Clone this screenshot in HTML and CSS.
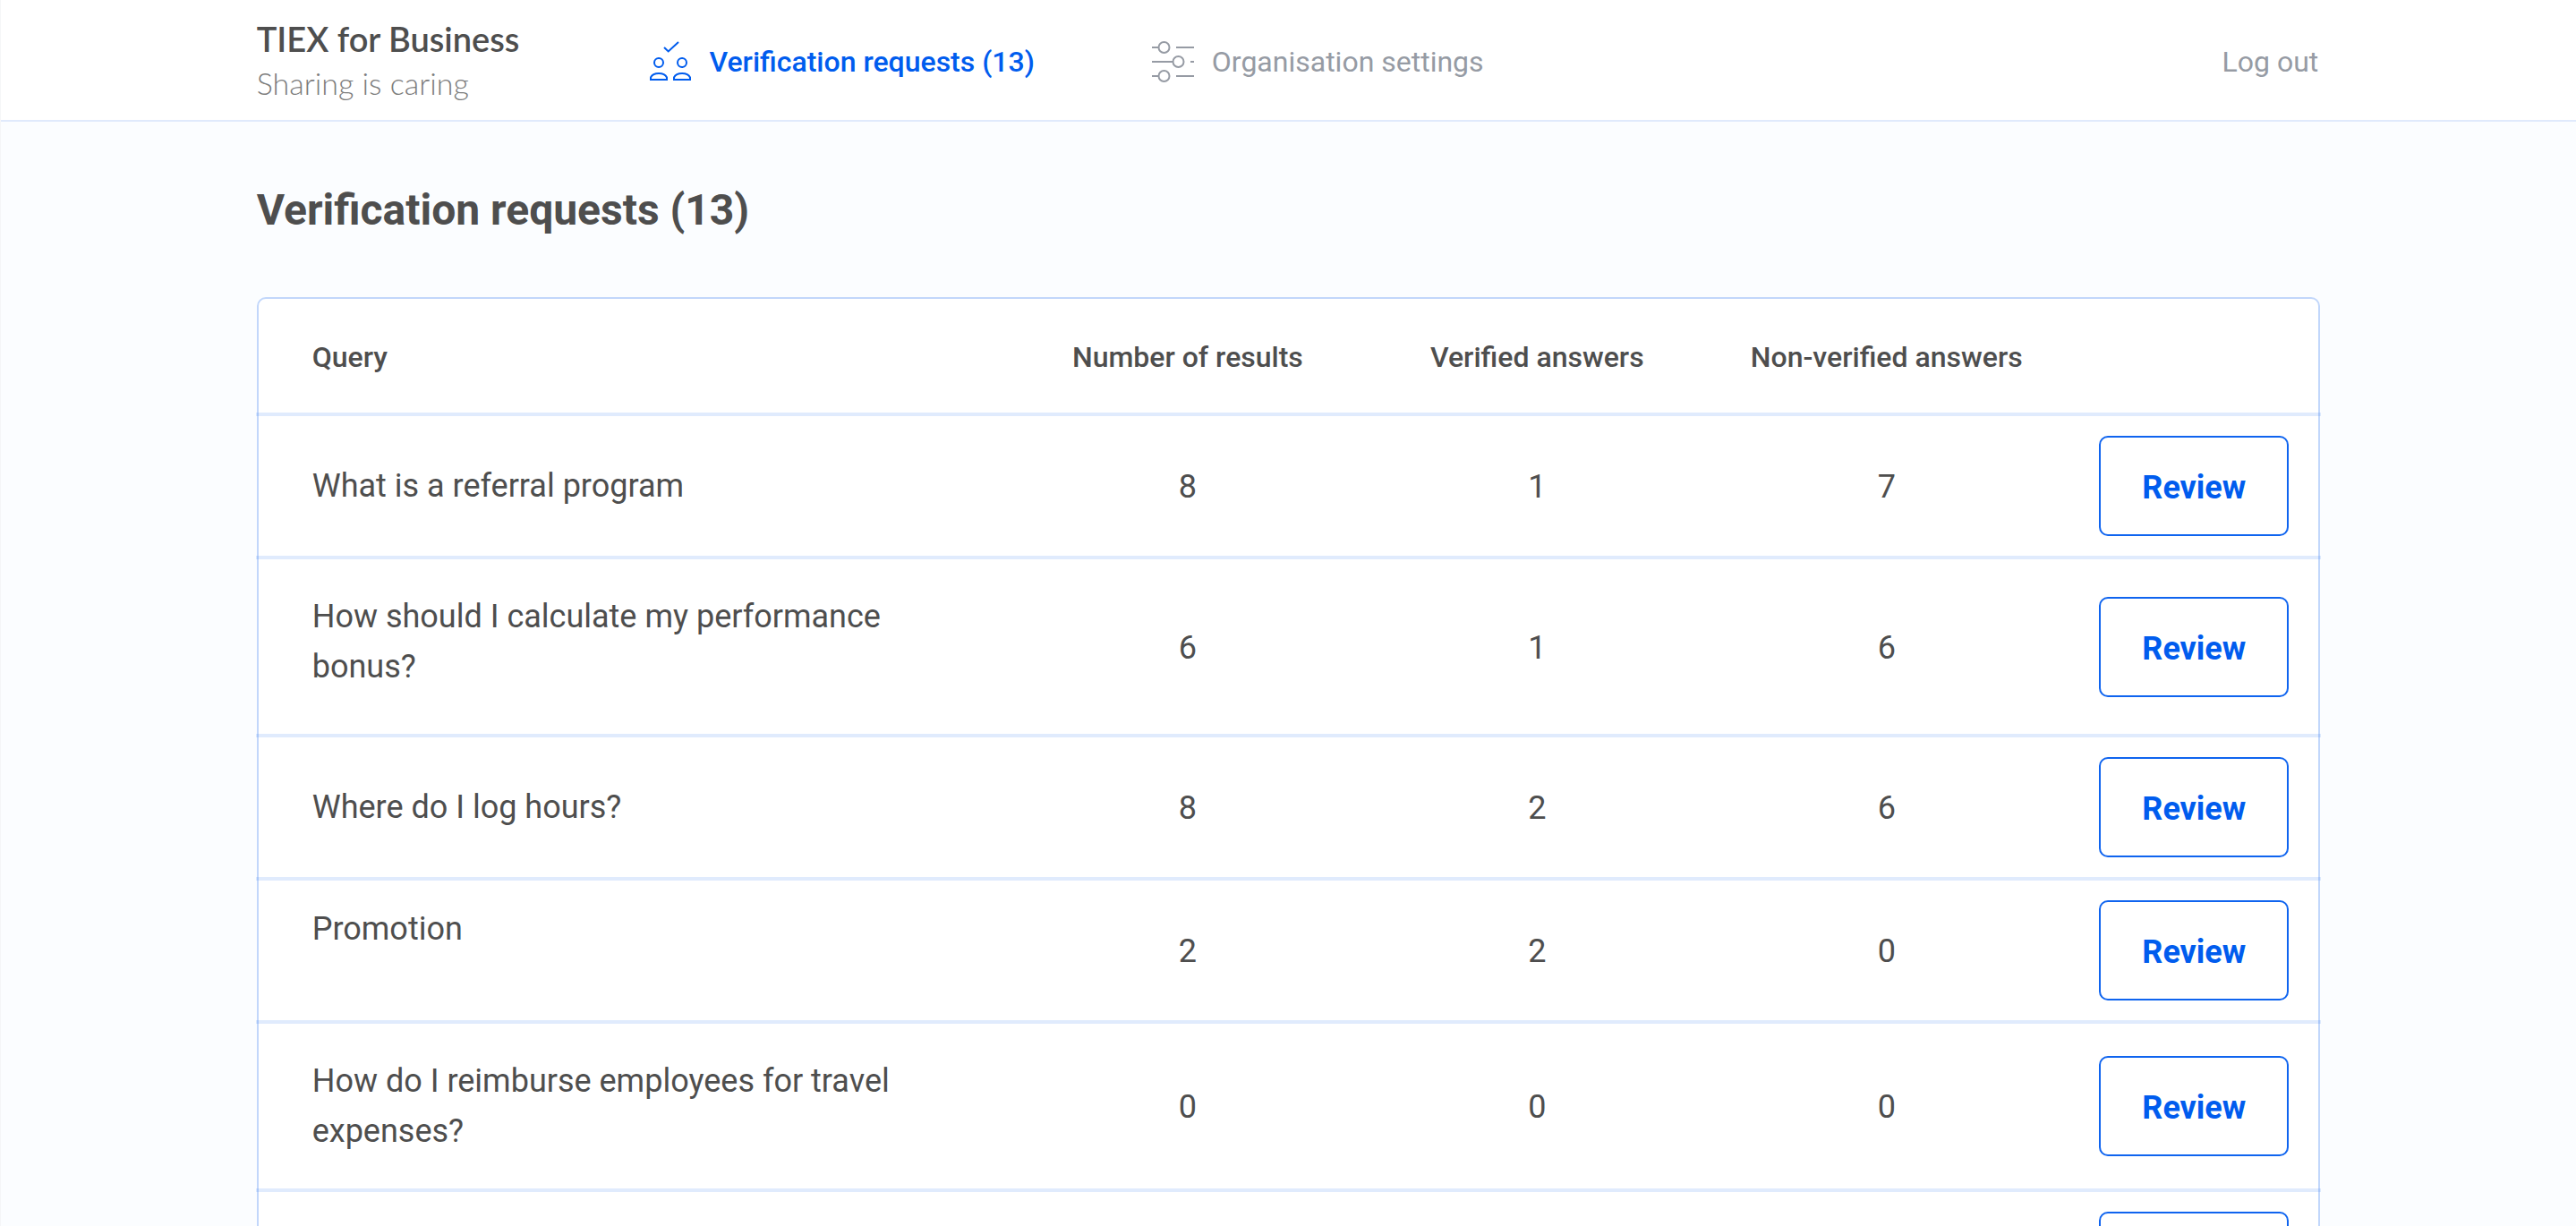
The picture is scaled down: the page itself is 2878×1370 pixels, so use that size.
FILE: index.html
```html
<!DOCTYPE html>
<html lang="en">
<head>
  <meta charset="utf-8">
  <meta name="viewport" content="width=device-width, initial-scale=1">
  <title>TIEX for Business</title>
  <link rel="stylesheet" href="styles.css">
</head>
<body>
  <div class="page">
    <header class="header">
      <div class="container header-inner">
        <div class="brand">
          <span class="brand-name">TIEX for Business</span>
          <span class="brand-tagline">Sharing is caring</span>
        </div>
        <nav class="nav">
          <a class="nav-link nav-link-active" href="#requests">
            <svg class="nav-icon" viewBox="0 0 48 48" aria-hidden="true">
              <path d="M18 8l4.700 4.500L34 2"/>
              <circle cx="12" cy="25" r="5"/>
              <circle cx="38" cy="25" r="5"/>
              <path d="M3 44v-2.500C4.500 38.500 8 37 12 37s7.500 1.500 9 4.500V44z"/>
              <path d="M29 44v-2.500c1.500-3 5-4.500 9-4.500s7.500 1.500 9 4.500V44z"/>
            </svg>
            Verification requests (13)
          </a>
          <a class="nav-link" href="#settings">
            <svg class="nav-icon" viewBox="0 0 48 48" aria-hidden="true">
              <path d="M1 8h7M28 8h20M1 24h23M44 24h4M1 40h7M28 40h20"/>
              <circle cx="14.500" cy="8" r="6"/>
              <circle cx="30.500" cy="24" r="6"/>
              <circle cx="14.500" cy="40" r="6"/>
            </svg>
            Organisation settings
          </a>
          <a class="nav-link nav-link-end" href="#logout">Log out</a>
        </nav>
      </div>
    </header>

    <main class="container main" id="requests">
      <h1 class="title">Verification requests (13)</h1>
      <div class="card">
        <table class="table">
          <colgroup>
            <col class="col-query">
            <col class="col-count">
            <col class="col-count">
            <col class="col-count">
            <col>
          </colgroup>
          <thead>
            <tr>
              <th class="query" scope="col">Query</th>
              <th scope="col">Number of results</th>
              <th scope="col">Verified answers</th>
              <th scope="col">Non-verified answers</th>
              <td></td>
            </tr>
          </thead>
          <tbody>
            <tr>
              <td class="query">What is a referral program</td>
              <td>8</td>
              <td>1</td>
              <td>7</td>
              <td class="action"><button class="button" type="button">Review</button></td>
            </tr>
            <tr>
              <td class="query query-roomy">How should I calculate my performance bonus?</td>
              <td>6</td>
              <td>1</td>
              <td>6</td>
              <td class="action"><button class="button" type="button">Review</button></td>
            </tr>
            <tr>
              <td class="query">Where do I log hours?</td>
              <td>8</td>
              <td>2</td>
              <td>6</td>
              <td class="action"><button class="button" type="button">Review</button></td>
            </tr>
            <tr>
              <td class="query query-top">Promotion</td>
              <td>2</td>
              <td>2</td>
              <td>0</td>
              <td class="action"><button class="button" type="button">Review</button></td>
            </tr>
            <tr>
              <td class="query">How do I reimburse employees for travel expenses?</td>
              <td>0</td>
              <td>0</td>
              <td>0</td>
              <td class="action"><button class="button" type="button">Review</button></td>
            </tr>
            <tr>
              <td class="query"></td>
              <td></td>
              <td></td>
              <td></td>
              <td class="action"><button class="button" type="button" aria-label="Review"></button></td>
            </tr>
          </tbody>
        </table>
      </div>
    </main>
  </div>
</body>
</html>
```

FILE: styles.css
```css
* {
  box-sizing: border-box;
}

body {
  margin: 0;
  background: #fbfdff;
  color: #4e4e4e;
  font-family: Roboto, "Liberation Sans", sans-serif;
  font-size: 36px;
  line-height: 56px;
}

.page {
  height: 100vh;
  overflow: hidden;
  border-left: 1px solid #f5f6f8;
}

.container {
  width: calc(80% + 4px);
  margin: 0 auto;
}

/* Header */

.header {
  background: #fff;
  border-bottom: 2px solid #e0eafc;
}

.header-inner {
  display: flex;
  align-items: center;
  gap: 144px;
  min-height: 134px;
}

.brand {
  display: flex;
  flex-direction: column;
  padding-top: 2px;
  font-family: Lato, "Open Sans", sans-serif;
  line-height: 50px;
  white-space: nowrap;
}

.brand-name {
  font-size: 38px;
  font-weight: 600;
}

.brand-tagline {
  color: #7c7c7c;
  font-size: 34px;
  font-weight: 300;
}

.nav {
  flex: 1;
  display: flex;
  align-items: center;
  gap: 130px;
  padding: 4px 2px 0 0;
}

.nav-link {
  display: flex;
  align-items: center;
  gap: 20px;
  color: #969ba4;
  font-size: 32px;
  line-height: 38px;
  text-decoration: none;
  white-space: nowrap;
}

.nav-link-active {
  color: #005cee;
  font-weight: 500;
}

.nav-link-end {
  margin-left: auto;
}

.nav-icon {
  width: 48px;
  height: 48px;
  fill: none;
  stroke: currentColor;
  stroke-width: 2;
}

/* Requests */

.main {
  padding-top: 71px;
}

.title {
  margin: 0 0 69px;
  font-size: 48px;
  font-weight: 700;
  line-height: 56px;
}

.card {
  background: #fff;
  border: 2px solid #c2d7fb;
  border-radius: 10px;
}

/* The row lines run slightly past the card's own border. */
.table {
  width: calc(100% + 6px);
  margin: 0 -3px;
  border-spacing: 0;
  table-layout: fixed;
}

.col-query {
  width: 36.66%;
}

.col-count {
  width: 16.92%;
}

th,
td {
  padding: 24px 0 22px;
  border-bottom: 4px solid rgba(0, 92, 238, 0.12);
  text-align: center;
  vertical-align: middle;
}

thead th {
  padding: 46px 0 43px;
  font-size: 32px;
  font-weight: 500;
  line-height: 38px;
}

thead .query {
  padding-left: 63px;
  text-align: left;
}

tbody .query {
  padding: 36px 60px 36px 63px;
  text-align: left;
}

tbody .query-roomy {
  padding-bottom: 47px;
}

tbody .query-top {
  padding-top: 26px;
  vertical-align: top;
}

tbody .action {
  padding: 22px 36px 22px 0;
}

.button {
  display: block;
  width: 212px;
  height: 112px;
  margin-left: auto;
  padding: 4px 0 0;
  border: 2px solid #0f64ef;
  border-radius: 10px;
  background: #fff;
  color: #005cee;
  font: inherit;
  font-weight: 700;
}
```
